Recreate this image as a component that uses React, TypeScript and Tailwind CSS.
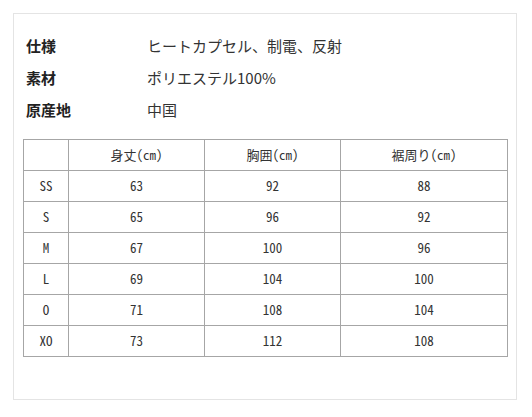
import React from "react";

const rows = [
  ["SS", "63", "92", "88"],
  ["S", "65", "96", "92"],
  ["M", "67", "100", "96"],
  ["L", "69", "104", "100"],
  ["O", "71", "108", "104"],
  ["XO", "73", "112", "108"],
];

const specs = [
  ["仕様", "ヒートカプセル、制電、反射"],
  ["素材", "ポリエステル100%"],
  ["原産地", "中国"],
];

const tableFont = '"Noto Sans Mono CJK JP", "Noto Sans CJK JP", "Liberation Sans", monospace';

export default function App() {
  return (
    <div className="w-[532px] h-[417px] bg-white pt-[13px] pl-[13px]" style={{ fontFamily: '"Noto Sans CJK JP", "Noto Sans", sans-serif' }}>
      <div className="w-[504px] h-[387px] border border-[#e4e4e4] pt-[16px] pl-[9px]">
        <div className="flex flex-col">
          {specs.map(([k, v]) => (
            <div key={k} className="flex items-center h-[32px] text-[15px]">
              <div className="w-[124px] pl-[3px] font-bold text-[#222]">{k}</div>
              <div className="text-[#333]">{v}</div>
            </div>
          ))}
        </div>
        <table className="mt-[13px] border-collapse text-[13px] text-[#333]" style={{ fontFamily: tableFont }}>
          <tbody>
            <tr className="h-[31px]">
              <td className="w-[45px] border border-[#a6a6a6]"></td>
              <td className="w-[136px] border border-[#a6a6a6] text-center p-0">身丈(cm)</td>
              <td className="w-[136px] border border-[#a6a6a6] text-center p-0">胸囲(cm)</td>
              <td className="w-[167px] border border-[#a6a6a6] text-center p-0">裾周り(cm)</td>
            </tr>
            {rows.map((r) => (
              <tr key={r[0]} className="h-[31px]">
                {r.map((c, i) => (
                  <td key={i} className="border border-[#a6a6a6] text-center p-0">{c}</td>
                ))}
              </tr>
            ))}
          </tbody>
        </table>
      </div>
    </div>
  );
}
